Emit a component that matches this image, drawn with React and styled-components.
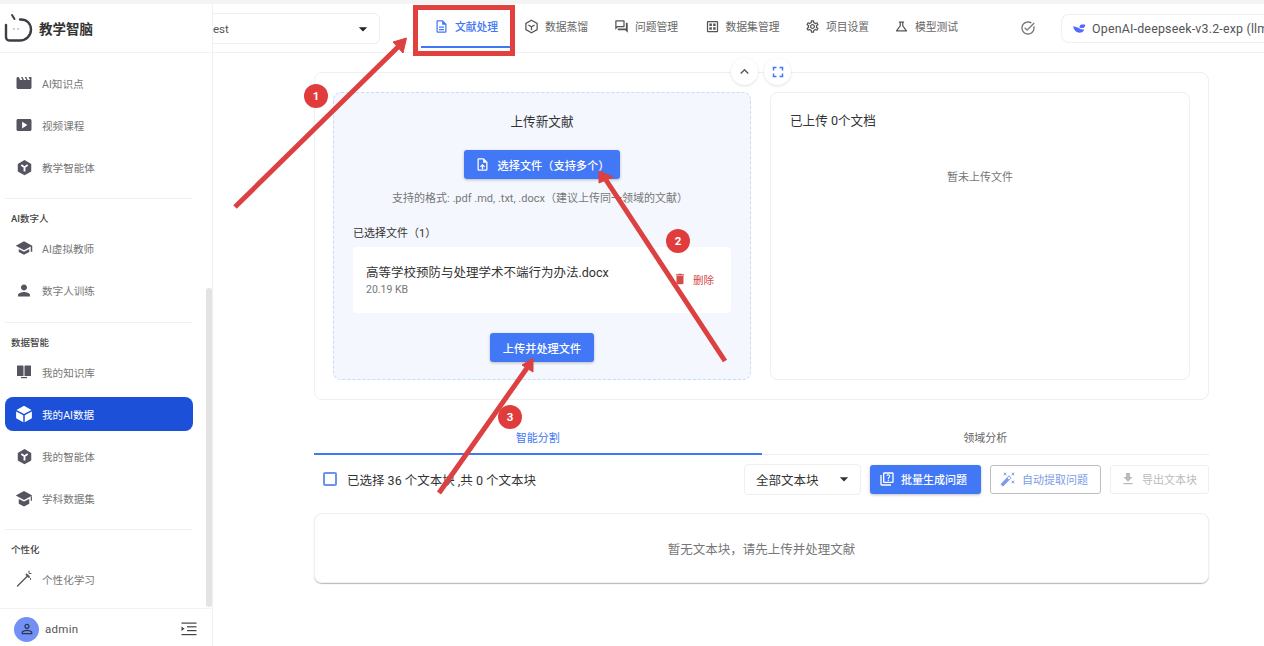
import React from 'react';
import styled, { createGlobalStyle } from 'styled-components';
import {
  MdMovie, MdSmartDisplay, MdSchool, MdPerson, MdOutlineDescription,
  MdOutlineQuestionAnswer, MdOutlineDataset, MdOutlineSettings, MdOutlineScience, MdOutlineTaskAlt,
  MdArrowDropDown, MdExpandLess, MdFullscreen, MdOutlineUploadFile, MdDelete, MdOutlineQuiz,
  MdAutoFixHigh, MdFileDownload, MdOutlinePersonOutline,
} from 'react-icons/md';

const BLUE = '#4277f5';

const GlobalStyle = createGlobalStyle`
  html, body { margin: 0; padding: 0; background: #fff; }
  body { font-family: Roboto, "Noto Sans CJK SC", sans-serif; color: #333; }
  * { box-sizing: border-box; }
`;

const Page = styled.div`
  position: relative;
  width: 1264px;
  height: 646px;
  overflow: hidden;
  display: flex;
  flex-direction: column;
`;

const TopStrip = styled.div`
  height: 4px;
  flex: none;
  background: #f4f4f4;
`;

const Body = styled.div`
  flex: 1;
  display: flex;
  min-height: 0;
`;

const Sidebar = styled.aside`
  position: relative;
  width: 213px;
  flex: none;
  display: flex;
  flex-direction: column;
  background: #fff;
  border-right: 1px solid #f0f0f0;
`;

const Brand = styled.div`
  height: 49px;
  flex: none;
  display: flex;
  align-items: center;
  gap: 5px;
  padding-left: 4px;
  border-bottom: 1px solid #f3f3f3;
  font-size: 13.5px;
  font-weight: 700;
  color: #333;
`;

const Nav = styled.nav`
  flex: 1;
  padding: 9px 19px 0 5px;
`;

const NavItem = styled.div`
  height: ${p => (p.$active ? '34px' : '42px')};
  margin: ${p => (p.$active ? '4px 0' : '0')};
  display: flex;
  align-items: center;
  padding-left: 10px;
  border-radius: 8px;
  font-size: 10.6px;
  color: ${p => (p.$active ? '#fff' : '#777')};
  background: ${p => (p.$active ? '#1c50d8' : 'transparent')};
`;

const NavIcon = styled.span`
  width: 18px;
  height: 18px;
  margin-right: 9px;
  flex: none;
  display: flex;
  align-items: center;
  justify-content: center;
  color: ${p => (p.$active ? '#fff' : '#55555f')};
`;

const Divider = styled.div`
  height: 1px;
  margin-top: ${p => p.$gap}px;
  background: #f1f1f1;
`;

const SectionTitle = styled.div`
  height: 28px;
  padding: 9px 0 0 6px;
  display: flex;
  align-items: center;
  font-size: 9.5px;
  font-weight: 500;
  color: #444;
`;

const Scrollbar = styled.div`
  position: absolute;
  left: 206px;
  top: 284px;
  width: 6px;
  height: 319px;
  border-radius: 3px;
  background: #e3e3e3;
`;

const SidebarFooter = styled.div`
  height: 38px;
  flex: none;
  display: flex;
  align-items: center;
  gap: 6px;
  padding: 3px 15px 0 14px;
  border-top: 1px solid #f3f3f3;
  font-size: 11.5px;
  color: #555;
`;

const Avatar = styled.div`
  width: 25px;
  height: 25px;
  border-radius: 50%;
  display: flex;
  align-items: center;
  justify-content: center;
  background: #7391f5;
  color: #2c3550;
`;

const FooterName = styled.span`
  flex: 1;
  letter-spacing: 0.3px;
`;

const Main = styled.main`
  flex: 1;
  min-width: 0;
  display: flex;
  flex-direction: column;
`;

const Header = styled.header`
  height: 49px;
  flex: none;
  display: flex;
  align-items: stretch;
  border-bottom: 1px solid #f1f1f1;
`;

const ProjectSelect = styled.div`
  width: 167px;
  height: 31px;
  flex: none;
  margin: 9px 41px 0 0;
  padding: 0 6px 0 0;
  display: flex;
  align-items: center;
  justify-content: space-between;
  border: 1px solid #efefef;
  border-left: none;
  border-radius: 0 6px 6px 0;
  font-size: 11.5px;
  color: #555;
  svg { color: #222; }
`;

const Tab = styled.div`
  width: ${p => p.$width}px;
  height: 42px;
  flex: none;
  display: flex;
  align-items: center;
  justify-content: center;
  gap: 6px;
  margin-top: 2px;
  font-size: 10.8px;
  font-weight: ${p => (p.$active ? 500 : 400)};
  color: ${p => (p.$active ? BLUE : '#666')};
  border-bottom: 2px solid ${p => (p.$active ? BLUE : 'transparent')};
  svg { color: ${p => (p.$active ? BLUE : '#555')}; }
`;

const HeaderEnd = styled.div`
  flex: none;
  display: flex;
  align-items: center;
  margin-left: 49px;
  gap: 25px;
  color: #777;
`;

const ModelChip = styled.div`
  width: 240px;
  height: 29px;
  flex: none;
  display: flex;
  align-items: center;
  gap: 6px;
  padding-left: 10px;
  white-space: nowrap;
  border: 1px solid #efefef;
  border-right: none;
  border-radius: 8px 0 0 8px;
  font-size: 12.4px;
  letter-spacing: 0.2px;
  color: #555;
`;

const Content = styled.div`
  position: relative;
  padding: 19px 55px 0 101px;
`;

const FloatingControls = styled.div`
  position: absolute;
  top: 5px;
  left: 518px;
  display: flex;
  gap: 6px;
`;

const RoundButton = styled.div`
  width: 27px;
  height: 27px;
  border-radius: 50%;
  background: #fff;
  display: flex;
  align-items: center;
  justify-content: center;
  box-shadow: 0 1px 3px rgba(0, 0, 0, 0.12);
  color: ${p => p.$color};
`;

const UploadCard = styled.section`
  height: 328px;
  display: grid;
  grid-template-columns: 418px 420px;
  column-gap: 19px;
  padding: 19px 18px;
  border: 1px solid #efefef;
  border-radius: 8px;
`;

const DropZone = styled.div`
  display: flex;
  flex-direction: column;
  align-items: center;
  padding: 20px 19px 0;
  border: 1px dashed #c8dcf8;
  border-radius: 8px;
  background: #f4f7fe;
`;

const PanelTitle = styled.div`
  font-size: 12.6px;
  line-height: 18px;
  color: #333;
`;

const PrimaryButton = styled.div`
  height: 29px;
  flex: none;
  display: flex;
  align-items: center;
  justify-content: center;
  gap: 8px;
  border-radius: 3px;
  background: ${BLUE};
  color: #fff;
  font-size: 11.2px;
  font-weight: 500;
  box-shadow: 0 1px 3px rgba(0, 0, 0, 0.25);
`;

const UploadAction = styled(PrimaryButton)`
  margin-top: 19px;
  width: 156px;
  white-space: nowrap;
`;

const FormatHint = styled.div`
  margin: 12px 0 0 -4px;
  font-size: 11px;
  line-height: 16px;
  color: #777;
`;

const SelectedLabel = styled.div`
  align-self: flex-start;
  margin-top: 19px;
  font-size: 11px;
  line-height: 16px;
  color: #333;
`;

const FileRow = styled.div`
  align-self: stretch;
  height: 66px;
  flex: none;
  margin-top: 5px;
  padding: 0 17px 0 13px;
  display: flex;
  align-items: center;
  justify-content: space-between;
  border-radius: 4px;
  background: #fff;
`;

const FileName = styled.div`
  font-size: 12.5px;
  line-height: 18px;
  color: #333;
`;

const FileSize = styled.div`
  font-size: 10.5px;
  line-height: 15px;
  color: #777;
`;

const DeleteAction = styled.div`
  display: flex;
  align-items: center;
  gap: 6px;
  margin-bottom: 2px;
  font-size: 10.5px;
  color: #d74a4a;
`;

const SubmitAction = styled(PrimaryButton)`
  margin-top: 20px;
  width: 104px;
`;

const FilesPanel = styled.div`
  padding: 19px;
  border: 1px solid #efefef;
  border-radius: 8px;
`;

const EmptyFiles = styled.div`
  margin-top: 40px;
  text-align: center;
  font-size: 11px;
  line-height: 16px;
  color: #777;
`;

const SplitTabs = styled.div`
  height: 36px;
  margin-top: 19px;
  display: grid;
  grid-template-columns: 1fr 1fr;
  border-bottom: 1px solid #eee;
`;

const SplitTab = styled.div`
  display: flex;
  align-items: center;
  justify-content: center;
  margin-bottom: -1px;
  padding-top: 1px;
  font-size: 11px;
  color: ${p => (p.$active ? BLUE : '#666')};
  border-bottom: 2px solid ${p => (p.$active ? BLUE : 'transparent')};
`;

const Toolbar = styled.div`
  height: 32px;
  margin-top: 8px;
  display: flex;
  align-items: center;
`;

const CheckBox = styled.span`
  width: 14px;
  height: 14px;
  margin-left: 9px;
  border: 2px solid #6c91f3;
  border-radius: 2px;
`;

const SelectionText = styled.div`
  flex: 1;
  margin-left: 10px;
  font-size: 12.5px;
  color: #333;
`;

const BlockSelect = styled.div`
  width: 117px;
  height: 31px;
  margin-right: 9px;
  padding: 0 6px 0 11px;
  display: flex;
  align-items: center;
  justify-content: space-between;
  border: 1px solid #efefef;
  border-radius: 4px;
  font-size: 12.5px;
  color: #333;
  svg { color: #333; }
`;

const ActionButton = styled.div`
  width: ${p => p.$width}px;
  height: 29px;
  display: flex;
  align-items: center;
  gap: 6px;
  padding-left: 9px;
  margin-left: ${p => p.$gap || 0}px;
  border-radius: 3px;
  font-size: 11px;
  font-weight: ${p => (p.$variant === 'solid' ? 500 : 400)};
  color: ${p => ({ solid: '#fff', outline: '#7c9ce9', disabled: '#bbb' })[p.$variant]};
  background: ${p => (p.$variant === 'solid' ? BLUE : '#fff')};
  border: ${p => ({ solid: 'none', outline: '1px solid #bcbcc4', disabled: '1px solid #efefef' })[p.$variant]};
  box-shadow: ${p => (p.$variant === 'solid' ? '0 1px 3px rgba(0, 0, 0, 0.25)' : 'none')};
`;

const EmptyBlocks = styled.div`
  height: 70px;
  margin-top: 18px;
  display: flex;
  align-items: center;
  justify-content: center;
  border: 1px solid #efefef;
  border-radius: 8px;
  box-shadow: 0 1px 1px rgba(0, 0, 0, 0.28);
  font-size: 12.5px;
  color: #777;
`;

// the red marks drawn on top of the screenshot
const Annotations = styled.svg`
  position: absolute;
  inset: 0;
  pointer-events: none;
`;

const HighlightBox = styled.div`
  position: absolute;
  left: 413px;
  top: 5px;
  width: 102px;
  height: 51px;
  border: 5px solid #e23f3f;
`;

const StepBadge = styled.div`
  position: absolute;
  left: ${p => p.$x - 12}px;
  top: ${p => p.$y - 12}px;
  width: 24px;
  height: 24px;
  border-radius: 50%;
  display: flex;
  align-items: center;
  justify-content: center;
  background: #e03c3c;
  color: #fff;
  font-size: 11.5px;
  font-weight: 700;
`;

const HexIcon = ({ size = 17 }) => (
  <svg width={size} height={size} viewBox="0 0 24 24" fill="currentColor">
    <path d="M12 1.500 21.500 7v10.500L12 23l-9.500-5.500V7z" />
    <path d="M7.500 8.500 12 11.500l4.500-3M12 11.500V17.500" fill="none" stroke="#fff" strokeWidth="2.600" />
  </svg>
);

const HexOutlineIcon = () => (
  <svg width="15" height="15" viewBox="0 0 24 24" fill="none" stroke="currentColor" strokeWidth="2">
    <path d="M12 2 21 7v10l-9 5-9-5V7z" />
    <path d="M7 9.500 12 12.500l5-3M12 12.500V18" />
  </svg>
);

const CubeIcon = () => (
  <svg width="18" height="18" viewBox="0 0 24 24" fill="currentColor">
    <path d="M12 1 22 6.500 12 12 2 6.500z" />
    <path d="M1.500 8.500 11 13.500V23L1.500 17.800z" />
    <path d="M22.500 8.500 13 13.500V23l9.500-5.200z" />
  </svg>
);

const CapIcon = () => (
  <svg width="19" height="19" viewBox="0 0 24 24" fill="currentColor">
    <path d="M12 2 23 8 12 14 1 8z" />
    <path d="M5 12.500 12 16l7-3.500V19l-7 3.500L5 19z" />
    <rect x="21" y="9" width="1.600" height="6" />
  </svg>
);

const BookIcon = () => (
  <svg width="16" height="16" viewBox="0 0 16 16" fill="currentColor">
    <path d="M1 1.500h5.500c.8 0 1 .5 1 1v9.500H1z" />
    <path d="M15 1.500H9.500c-.8 0-1 .5-1 1v9.500H15z" />
    <rect x="5" y="13" width="6" height="1.200" />
  </svg>
);

const WandIcon = () => (
  <svg width="18" height="18" viewBox="0 0 18 18" fill="none" stroke="currentColor" strokeWidth="1.300" strokeLinecap="round">
    <path d="M2.500 16 13 5.500" />
    <path d="M11.500 4.500 14 7" strokeWidth="1.800" />
    <path d="M14 1v2M16 3.500h-1.500M15.500 8.500v1" strokeWidth="1" />
  </svg>
);

const LogoMark = () => (
  <svg width="30" height="30" viewBox="0 0 30 30" fill="none" stroke="#3d3d45" strokeWidth="2.400" strokeLinecap="round">
    <path d="M16 6.500C23 6 27 11 27 16.500 27 23 22 27.500 16 27.500H6C3.500 27.500 2 26 2 24V12" />
    <path d="M8 2 10.500 6" strokeWidth="2" />
    <circle cx="10" cy="16" r="0.700" fill="#777" stroke="none" />
    <circle cx="14" cy="16" r="0.700" fill="#777" stroke="none" />
  </svg>
);

const WhaleIcon = () => (
  <svg width="14" height="14" viewBox="0 0 24 24" fill="#4d6bfe">
    <path d="M2 9c1 7 6 11 11 11 4 0 7-2 8-6-2 1-5 1-8-1-3-2-6-3-11-4z" />
    <path d="M13 11c-1-3 2-6 5-5 1 .3 2 0 3-1 0 1 1 2 2 2-1 1-1 2-1 3-1 2-6 3-9 1z" />
  </svg>
);

const MenuFoldIcon = () => (
  <svg width="16" height="16" viewBox="0 0 16 16" fill="#444">
    <rect x="0.500" y="1.500" width="15" height="1.200" />
    <rect x="6" y="5.200" width="9.500" height="1.200" />
    <rect x="6" y="9" width="9.500" height="1.200" />
    <rect x="0.500" y="13" width="15" height="1.200" />
    <path d="M0.500 5.500 3.500 7.700.500 10z" />
  </svg>
);

const headerTabs = [
  { label: '文献处理', icon: <MdOutlineDescription size={15} />, width: 90, active: true },
  { label: '数据蒸馏', icon: <HexOutlineIcon />, width: 90 },
  { label: '问题管理', icon: <MdOutlineQuestionAnswer size={15} />, width: 90 },
  { label: '数据集管理', icon: <MdOutlineDataset size={15} />, width: 102 },
  { label: '项目设置', icon: <MdOutlineSettings size={15} />, width: 88 },
  { label: '模型测试', icon: <MdOutlineScience size={15} />, width: 90 },
];

const navGroups = [
  {
    items: [
      { label: 'AI知识点', icon: <MdMovie size={18} /> },
      { label: '视频课程', icon: <MdSmartDisplay size={18} /> },
      { label: '教学智能体', icon: <HexIcon /> },
    ],
  },
  {
    title: 'AI数字人',
    gap: 10,
    items: [
      { label: 'AI虚拟教师', icon: <MdSchool size={18} /> },
      { label: '数字人训练', icon: <MdPerson size={21} /> },
    ],
  },
  {
    title: '数据智能',
    gap: 11,
    items: [
      { label: '我的知识库', icon: <BookIcon /> },
      { label: '我的AI数据', icon: <CubeIcon />, active: true },
      { label: '我的智能体', icon: <HexIcon /> },
      { label: '学科数据集', icon: <CapIcon /> },
    ],
  },
  {
    title: '个性化',
    gap: 10,
    items: [{ label: '个性化学习', icon: <WandIcon /> }],
  },
];

export default function App() {
  return (
    <Page>
      <GlobalStyle />
      <TopStrip />
      <Body>
        <Sidebar>
          <Brand>
            <LogoMark />
            教学智脑
          </Brand>
          <Nav>
            {navGroups.map((group, i) => (
              <div key={i}>
                {group.gap && <Divider $gap={group.gap} />}
                {group.title && <SectionTitle>{group.title}</SectionTitle>}
                {group.items.map(item => (
                  <NavItem key={item.label} $active={item.active}>
                    <NavIcon $active={item.active}>{item.icon}</NavIcon>
                    {item.label}
                  </NavItem>
                ))}
              </div>
            ))}
          </Nav>
          <Scrollbar />
          <SidebarFooter>
            <Avatar><MdOutlinePersonOutline size={16} /></Avatar>
            <FooterName>admin</FooterName>
            <MenuFoldIcon />
          </SidebarFooter>
        </Sidebar>

        <Main>
          <Header>
            <ProjectSelect>
              <span>est</span>
              <MdArrowDropDown size={20} />
            </ProjectSelect>
            {headerTabs.map(tab => (
              <Tab key={tab.label} $width={tab.width} $active={tab.active}>
                {tab.icon}
                {tab.label}
              </Tab>
            ))}
            <HeaderEnd>
              <MdOutlineTaskAlt size={16} />
              <ModelChip>
                <WhaleIcon />
                OpenAI-deepseek-v3.2-exp (llm
              </ModelChip>
            </HeaderEnd>
          </Header>

          <Content>
            <FloatingControls>
              <RoundButton $color="#555"><MdExpandLess size={17} /></RoundButton>
              <RoundButton $color={BLUE}><MdFullscreen size={18} /></RoundButton>
            </FloatingControls>
            <UploadCard>
              <DropZone>
                <PanelTitle>上传新文献</PanelTitle>
                <UploadAction>
                  <MdOutlineUploadFile size={15} />
                  选择文件（支持多个）
                </UploadAction>
                <FormatHint>支持的格式: .pdf .md, .txt, .docx（建议上传同一领域的文献）</FormatHint>
                <SelectedLabel>已选择文件（1）</SelectedLabel>
                <FileRow>
                  <div>
                    <FileName>高等学校预防与处理学术不端行为办法.docx</FileName>
                    <FileSize>20.19 KB</FileSize>
                  </div>
                  <DeleteAction>
                    <MdDelete size={14} />
                    删除
                  </DeleteAction>
                </FileRow>
                <SubmitAction>上传并处理文件</SubmitAction>
              </DropZone>
              <FilesPanel>
                <PanelTitle>已上传 0个文档</PanelTitle>
                <EmptyFiles>暂未上传文件</EmptyFiles>
              </FilesPanel>
            </UploadCard>

            <SplitTabs>
              <SplitTab $active>智能分割</SplitTab>
              <SplitTab>领域分析</SplitTab>
            </SplitTabs>

            <Toolbar>
              <CheckBox />
              <SelectionText>已选择 36 个文本块 ,共 0 个文本块</SelectionText>
              <BlockSelect>
                全部文本块
                <MdArrowDropDown size={20} />
              </BlockSelect>
              <ActionButton $variant="solid" $width={111}>
                <MdOutlineQuiz size={16} />
                批量生成问题
              </ActionButton>
              <ActionButton $variant="outline" $width={111} $gap={9}>
                <MdAutoFixHigh size={16} />
                自动提取问题
              </ActionButton>
              <ActionButton $variant="disabled" $width={99} $gap={9}>
                <MdFileDownload size={16} />
                导出文本块
              </ActionButton>
            </Toolbar>

            <EmptyBlocks>暂无文本块，请先上传并处理文献</EmptyBlocks>
          </Content>
        </Main>
      </Body>

      <HighlightBox />
      <Annotations width="1264" height="646" viewBox="0 0 1264 646">
        <g fill="#dd4040" stroke="#dd4040">
          <line x1="235" y1="207" x2="398" y2="47" strokeWidth="5" />
          <path d="M406.500 38 403 53 393 42z" strokeWidth="1" />
          <line x1="725" y1="361" x2="606" y2="180" strokeWidth="5" />
          <path d="M599 171 613 177 599 183z" strokeWidth="1" />
          <line x1="439" y1="493" x2="527" y2="368" strokeWidth="5" />
          <path d="M533 358 533 372 522 365z" strokeWidth="1" />
        </g>
      </Annotations>
      <StepBadge $x={316} $y={96}>1</StepBadge>
      <StepBadge $x={678} $y={241}>2</StepBadge>
      <StepBadge $x={510} $y={417}>3</StepBadge>
    </Page>
  );
}
